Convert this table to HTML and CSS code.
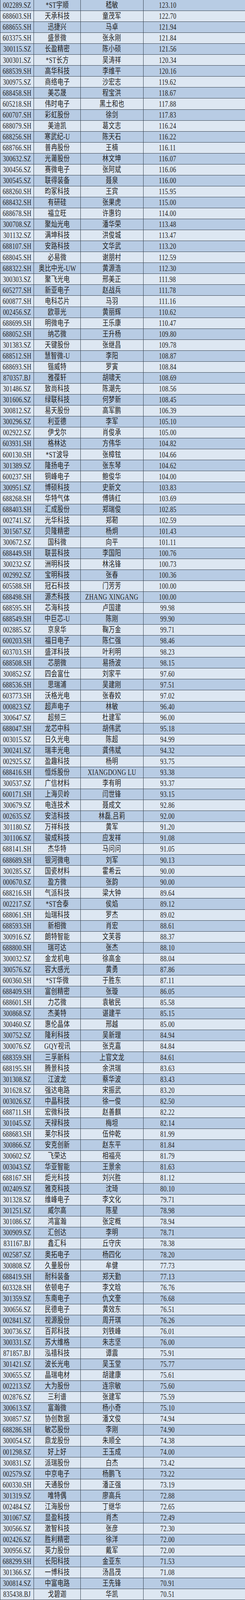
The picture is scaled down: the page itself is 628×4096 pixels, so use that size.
FILE: index.html
```html
<!DOCTYPE html>
<html lang="zh-CN">
<head>
<meta charset="utf-8">
<title>薪酬排行</title>
<link rel="stylesheet" href="styles.css">
</head>
<body>
<div class="tbl">
<div class="r d"><div class="c"><span>002289.SZ</span></div><div class="c"><span>*ST宇顺</span></div><div class="c"><span>嵇敏</span></div><div class="c n"><span>123.10</span></div></div>
<div class="r"><div class="c"><span>688603.SH</span></div><div class="c"><span>天承科技</span></div><div class="c"><span>童茂军</span></div><div class="c n"><span>122.70</span></div></div>
<div class="r d"><div class="c"><span>688655.SH</span></div><div class="c"><span>迅捷兴</span></div><div class="c"><span>马卓</span></div><div class="c n"><span>121.94</span></div></div>
<div class="r"><div class="c"><span>603375.SH</span></div><div class="c"><span>盛景微</span></div><div class="c"><span>张永刚</span></div><div class="c n"><span>121.84</span></div></div>
<div class="r d"><div class="c"><span>300115.SZ</span></div><div class="c"><span>长盈精密</span></div><div class="c"><span>陈小硕</span></div><div class="c n"><span>121.56</span></div></div>
<div class="r"><div class="c"><span>300301.SZ</span></div><div class="c"><span>*ST长方</span></div><div class="c"><span>吴涛祥</span></div><div class="c n"><span>120.34</span></div></div>
<div class="r d"><div class="c"><span>688539.SH</span></div><div class="c"><span>高华科技</span></div><div class="c"><span>李维平</span></div><div class="c n"><span>120.16</span></div></div>
<div class="r"><div class="c"><span>300975.SZ</span></div><div class="c"><span>商络电子</span></div><div class="c"><span>沙宏志</span></div><div class="c n"><span>119.62</span></div></div>
<div class="r d"><div class="c"><span>688458.SH</span></div><div class="c"><span>美芯晟</span></div><div class="c"><span>程宝洪</span></div><div class="c n"><span>118.67</span></div></div>
<div class="r"><div class="c"><span>605218.SH</span></div><div class="c"><span>伟时电子</span></div><div class="c"><span>黑土和也</span></div><div class="c n"><span>117.88</span></div></div>
<div class="r d"><div class="c"><span>600707.SH</span></div><div class="c"><span>彩虹股份</span></div><div class="c"><span>徐剑</span></div><div class="c n"><span>117.83</span></div></div>
<div class="r"><div class="c"><span>688079.SH</span></div><div class="c"><span>美迪凯</span></div><div class="c"><span>葛文志</span></div><div class="c n"><span>116.24</span></div></div>
<div class="r d"><div class="c"><span>688256.SH</span></div><div class="c"><span>寒武纪-U</span></div><div class="c"><span>陈天石</span></div><div class="c n"><span>116.22</span></div></div>
<div class="r"><div class="c"><span>688766.SH</span></div><div class="c"><span>普冉股份</span></div><div class="c"><span>王楠</span></div><div class="c n"><span>116.11</span></div></div>
<div class="r d"><div class="c"><span>300632.SZ</span></div><div class="c"><span>光莆股份</span></div><div class="c"><span>林文坤</span></div><div class="c n"><span>116.07</span></div></div>
<div class="r"><div class="c"><span>300456.SZ</span></div><div class="c"><span>赛微电子</span></div><div class="c"><span>张阿斌</span></div><div class="c n"><span>116.06</span></div></div>
<div class="r d"><div class="c"><span>300545.SZ</span></div><div class="c"><span>联得装备</span></div><div class="c"><span>聂泉</span></div><div class="c n"><span>116.00</span></div></div>
<div class="r"><div class="c"><span>688260.SH</span></div><div class="c"><span>昀冢科技</span></div><div class="c"><span>王宾</span></div><div class="c n"><span>115.95</span></div></div>
<div class="r d"><div class="c"><span>688432.SH</span></div><div class="c"><span>有研硅</span></div><div class="c"><span>张果虎</span></div><div class="c n"><span>115.00</span></div></div>
<div class="r"><div class="c"><span>688678.SH</span></div><div class="c"><span>福立旺</span></div><div class="c"><span>许惠钧</span></div><div class="c n"><span>114.00</span></div></div>
<div class="r d"><div class="c"><span>300708.SZ</span></div><div class="c"><span>聚灿光电</span></div><div class="c"><span>潘华荣</span></div><div class="c n"><span>113.48</span></div></div>
<div class="r"><div class="c"><span>301132.SZ</span></div><div class="c"><span>满坤科技</span></div><div class="c"><span>洪俊城</span></div><div class="c n"><span>113.47</span></div></div>
<div class="r d"><div class="c"><span>688107.SH</span></div><div class="c"><span>安路科技</span></div><div class="c"><span>文华武</span></div><div class="c n"><span>113.20</span></div></div>
<div class="r"><div class="c"><span>688045.SH</span></div><div class="c"><span>必易微</span></div><div class="c"><span>谢朋村</span></div><div class="c n"><span>112.59</span></div></div>
<div class="r d"><div class="c"><span>688322.SH</span></div><div class="c"><span>奥比中光-UW</span></div><div class="c"><span>黄源浩</span></div><div class="c n"><span>112.30</span></div></div>
<div class="r"><div class="c"><span>300303.SZ</span></div><div class="c"><span>聚飞光电</span></div><div class="c"><span>邢美正</span></div><div class="c n"><span>111.98</span></div></div>
<div class="r d"><div class="c"><span>605277.SH</span></div><div class="c"><span>新亚电子</span></div><div class="c"><span>赵战兵</span></div><div class="c n"><span>111.78</span></div></div>
<div class="r"><div class="c"><span>600877.SH</span></div><div class="c"><span>电科芯片</span></div><div class="c"><span>马羽</span></div><div class="c n"><span>111.16</span></div></div>
<div class="r d"><div class="c"><span>002456.SZ</span></div><div class="c"><span>欧菲光</span></div><div class="c"><span>黄丽辉</span></div><div class="c n"><span>110.62</span></div></div>
<div class="r"><div class="c"><span>688699.SH</span></div><div class="c"><span>明微电子</span></div><div class="c"><span>王乐康</span></div><div class="c n"><span>110.47</span></div></div>
<div class="r d"><div class="c"><span>688052.SH</span></div><div class="c"><span>纳芯微</span></div><div class="c"><span>王升杨</span></div><div class="c n"><span>109.80</span></div></div>
<div class="r"><div class="c"><span>301383.SZ</span></div><div class="c"><span>天键股份</span></div><div class="c"><span>张继昌</span></div><div class="c n"><span>109.78</span></div></div>
<div class="r d"><div class="c"><span>688512.SH</span></div><div class="c"><span>慧智微-U</span></div><div class="c"><span>李阳</span></div><div class="c n"><span>108.87</span></div></div>
<div class="r"><div class="c"><span>688693.SH</span></div><div class="c"><span>锴威特</span></div><div class="c"><span>罗寅</span></div><div class="c n"><span>108.84</span></div></div>
<div class="r d"><div class="c"><span>870357.BJ</span></div><div class="c"><span>雅葆轩</span></div><div class="c"><span>胡啸天</span></div><div class="c n"><span>108.69</span></div></div>
<div class="r"><div class="c"><span>301486.SZ</span></div><div class="c"><span>致尚科技</span></div><div class="c"><span>陈潮先</span></div><div class="c n"><span>108.56</span></div></div>
<div class="r d"><div class="c"><span>301606.SZ</span></div><div class="c"><span>绿联科技</span></div><div class="c"><span>何梦新</span></div><div class="c n"><span>108.45</span></div></div>
<div class="r"><div class="c"><span>300812.SZ</span></div><div class="c"><span>易天股份</span></div><div class="c"><span>高军鹏</span></div><div class="c n"><span>106.39</span></div></div>
<div class="r d"><div class="c"><span>300296.SZ</span></div><div class="c"><span>利亚德</span></div><div class="c"><span>李军</span></div><div class="c n"><span>105.10</span></div></div>
<div class="r"><div class="c"><span>002922.SZ</span></div><div class="c"><span>伊戈尔</span></div><div class="c"><span>肖俊承</span></div><div class="c n"><span>105.00</span></div></div>
<div class="r d"><div class="c"><span>603931.SH</span></div><div class="c"><span>格林达</span></div><div class="c"><span>方伟华</span></div><div class="c n"><span>104.82</span></div></div>
<div class="r"><div class="c"><span>600130.SH</span></div><div class="c"><span>*ST波导</span></div><div class="c"><span>张樟铉</span></div><div class="c n"><span>104.66</span></div></div>
<div class="r d"><div class="c"><span>301389.SZ</span></div><div class="c"><span>隆扬电子</span></div><div class="c"><span>张东琴</span></div><div class="c n"><span>104.62</span></div></div>
<div class="r"><div class="c"><span>600237.SH</span></div><div class="c"><span>铜峰电子</span></div><div class="c"><span>鲍俊华</span></div><div class="c n"><span>104.00</span></div></div>
<div class="r d"><div class="c"><span>300951.SZ</span></div><div class="c"><span>博硕科技</span></div><div class="c"><span>史新文</span></div><div class="c n"><span>103.83</span></div></div>
<div class="r"><div class="c"><span>688268.SH</span></div><div class="c"><span>华特气体</span></div><div class="c"><span>傅铸红</span></div><div class="c n"><span>103.69</span></div></div>
<div class="r d"><div class="c"><span>688403.SH</span></div><div class="c"><span>汇成股份</span></div><div class="c"><span>郑瑞俊</span></div><div class="c n"><span>102.85</span></div></div>
<div class="r"><div class="c"><span>002741.SZ</span></div><div class="c"><span>光华科技</span></div><div class="c"><span>郑靭</span></div><div class="c n"><span>102.59</span></div></div>
<div class="r d"><div class="c"><span>301567.SZ</span></div><div class="c"><span>贝隆精密</span></div><div class="c"><span>杨炯</span></div><div class="c n"><span>101.43</span></div></div>
<div class="r"><div class="c"><span>300672.SZ</span></div><div class="c"><span>国科微</span></div><div class="c"><span>向平</span></div><div class="c n"><span>101.11</span></div></div>
<div class="r d"><div class="c"><span>688449.SH</span></div><div class="c"><span>联芸科技</span></div><div class="c"><span>李国阳</span></div><div class="c n"><span>100.76</span></div></div>
<div class="r"><div class="c"><span>300232.SZ</span></div><div class="c"><span>洲明科技</span></div><div class="c"><span>林洺锋</span></div><div class="c n"><span>100.73</span></div></div>
<div class="r d"><div class="c"><span>002992.SZ</span></div><div class="c"><span>宝明科技</span></div><div class="c"><span>张春</span></div><div class="c n"><span>100.36</span></div></div>
<div class="r"><div class="c"><span>605588.SH</span></div><div class="c"><span>冠石科技</span></div><div class="c"><span>门芳芳</span></div><div class="c n"><span>100.00</span></div></div>
<div class="r d"><div class="c"><span>688498.SH</span></div><div class="c"><span>源杰科技</span></div><div class="c"><span>ZHANG XINGANG</span></div><div class="c n"><span>100.00</span></div></div>
<div class="r"><div class="c"><span>688595.SH</span></div><div class="c"><span>芯海科技</span></div><div class="c"><span>卢国建</span></div><div class="c n"><span>99.98</span></div></div>
<div class="r d"><div class="c"><span>688549.SH</span></div><div class="c"><span>中巨芯-U</span></div><div class="c"><span>陈刚</span></div><div class="c n"><span>99.90</span></div></div>
<div class="r"><div class="c"><span>002885.SZ</span></div><div class="c"><span>京泉华</span></div><div class="c"><span>鞠万金</span></div><div class="c n"><span>99.71</span></div></div>
<div class="r d"><div class="c"><span>600203.SH</span></div><div class="c"><span>福日电子</span></div><div class="c"><span>陈仁强</span></div><div class="c n"><span>98.46</span></div></div>
<div class="r"><div class="c"><span>603703.SH</span></div><div class="c"><span>盛洋科技</span></div><div class="c"><span>叶利明</span></div><div class="c n"><span>98.23</span></div></div>
<div class="r d"><div class="c"><span>688508.SH</span></div><div class="c"><span>芯朋微</span></div><div class="c"><span>易扬波</span></div><div class="c n"><span>98.15</span></div></div>
<div class="r"><div class="c"><span>300852.SZ</span></div><div class="c"><span>四会富仕</span></div><div class="c"><span>刘家平</span></div><div class="c n"><span>97.60</span></div></div>
<div class="r d"><div class="c"><span>688536.SH</span></div><div class="c"><span>思瑞浦</span></div><div class="c"><span>吴建刚</span></div><div class="c n"><span>97.51</span></div></div>
<div class="r"><div class="c"><span>603773.SH</span></div><div class="c"><span>沃格光电</span></div><div class="c"><span>张春姣</span></div><div class="c n"><span>97.02</span></div></div>
<div class="r d"><div class="c"><span>000823.SZ</span></div><div class="c"><span>超声电子</span></div><div class="c"><span>林敏</span></div><div class="c n"><span>96.40</span></div></div>
<div class="r"><div class="c"><span>300647.SZ</span></div><div class="c"><span>超频三</span></div><div class="c"><span>杜建军</span></div><div class="c n"><span>96.00</span></div></div>
<div class="r d"><div class="c"><span>688047.SH</span></div><div class="c"><span>龙芯中科</span></div><div class="c"><span>胡伟武</span></div><div class="c n"><span>95.18</span></div></div>
<div class="r"><div class="c"><span>003015.SZ</span></div><div class="c"><span>日久光电</span></div><div class="c"><span>陈超</span></div><div class="c n"><span>94.99</span></div></div>
<div class="r d"><div class="c"><span>300241.SZ</span></div><div class="c"><span>瑞丰光电</span></div><div class="c"><span>龚伟斌</span></div><div class="c n"><span>94.32</span></div></div>
<div class="r"><div class="c"><span>002925.SZ</span></div><div class="c"><span>盈趣科技</span></div><div class="c"><span>杨明</span></div><div class="c n"><span>93.75</span></div></div>
<div class="r d"><div class="c"><span>688416.SH</span></div><div class="c"><span>恒烁股份</span></div><div class="c"><span>XIANGDONG LU</span></div><div class="c n"><span>93.38</span></div></div>
<div class="r"><div class="c"><span>300537.SZ</span></div><div class="c"><span>广信材料</span></div><div class="c"><span>李有明</span></div><div class="c n"><span>93.37</span></div></div>
<div class="r d"><div class="c"><span>600171.SH</span></div><div class="c"><span>上海贝岭</span></div><div class="c"><span>闫世锋</span></div><div class="c n"><span>93.15</span></div></div>
<div class="r"><div class="c"><span>300679.SZ</span></div><div class="c"><span>电连技术</span></div><div class="c"><span>聂成文</span></div><div class="c n"><span>92.86</span></div></div>
<div class="r d"><div class="c"><span>002635.SZ</span></div><div class="c"><span>安洁科技</span></div><div class="c"><span>林磊,吕莉</span></div><div class="c n"><span>92.00</span></div></div>
<div class="r"><div class="c"><span>301180.SZ</span></div><div class="c"><span>万祥科技</span></div><div class="c"><span>黄军</span></div><div class="c n"><span>91.20</span></div></div>
<div class="r d"><div class="c"><span>301106.SZ</span></div><div class="c"><span>骏成科技</span></div><div class="c"><span>应发祥</span></div><div class="c n"><span>91.08</span></div></div>
<div class="r"><div class="c"><span>688141.SH</span></div><div class="c"><span>杰华特</span></div><div class="c"><span>马问问</span></div><div class="c n"><span>91.05</span></div></div>
<div class="r d"><div class="c"><span>688689.SH</span></div><div class="c"><span>银河微电</span></div><div class="c"><span>刘军</span></div><div class="c n"><span>90.13</span></div></div>
<div class="r"><div class="c"><span>300285.SZ</span></div><div class="c"><span>国瓷材料</span></div><div class="c"><span>霍希云</span></div><div class="c n"><span>90.00</span></div></div>
<div class="r d"><div class="c"><span>000670.SZ</span></div><div class="c"><span>盈方微</span></div><div class="c"><span>张韵</span></div><div class="c n"><span>90.00</span></div></div>
<div class="r"><div class="c"><span>688216.SH</span></div><div class="c"><span>气派科技</span></div><div class="c"><span>梁大钟</span></div><div class="c n"><span>89.64</span></div></div>
<div class="r d"><div class="c"><span>002217.SZ</span></div><div class="c"><span>*ST合泰</span></div><div class="c"><span>侯焰</span></div><div class="c n"><span>89.12</span></div></div>
<div class="r"><div class="c"><span>688061.SH</span></div><div class="c"><span>灿瑞科技</span></div><div class="c"><span>罗杰</span></div><div class="c n"><span>89.02</span></div></div>
<div class="r d"><div class="c"><span>688593.SH</span></div><div class="c"><span>新相微</span></div><div class="c"><span>肖宏</span></div><div class="c n"><span>88.61</span></div></div>
<div class="r"><div class="c"><span>300916.SZ</span></div><div class="c"><span>朗特智能</span></div><div class="c"><span>文芙蓉</span></div><div class="c n"><span>88.37</span></div></div>
<div class="r d"><div class="c"><span>688800.SH</span></div><div class="c"><span>瑞可达</span></div><div class="c"><span>张杰</span></div><div class="c n"><span>88.10</span></div></div>
<div class="r"><div class="c"><span>300032.SZ</span></div><div class="c"><span>金龙机电</span></div><div class="c"><span>徐高金</span></div><div class="c n"><span>88.04</span></div></div>
<div class="r d"><div class="c"><span>300576.SZ</span></div><div class="c"><span>容大感光</span></div><div class="c"><span>黄勇</span></div><div class="c n"><span>87.86</span></div></div>
<div class="r"><div class="c"><span>600360.SH</span></div><div class="c"><span>*ST华微</span></div><div class="c"><span>于胜东</span></div><div class="c n"><span>87.11</span></div></div>
<div class="r d"><div class="c"><span>688409.SH</span></div><div class="c"><span>富创精密</span></div><div class="c"><span>张璇</span></div><div class="c n"><span>86.05</span></div></div>
<div class="r"><div class="c"><span>688601.SH</span></div><div class="c"><span>力芯微</span></div><div class="c"><span>袁敏民</span></div><div class="c n"><span>85.58</span></div></div>
<div class="r d"><div class="c"><span>300868.SZ</span></div><div class="c"><span>杰美特</span></div><div class="c"><span>谌建平</span></div><div class="c n"><span>85.15</span></div></div>
<div class="r"><div class="c"><span>300460.SZ</span></div><div class="c"><span>惠伦晶体</span></div><div class="c"><span>邢越</span></div><div class="c n"><span>85.00</span></div></div>
<div class="r d"><div class="c"><span>300752.SZ</span></div><div class="c"><span>隆利科技</span></div><div class="c"><span>吴新理</span></div><div class="c n"><span>84.94</span></div></div>
<div class="r"><div class="c"><span>300076.SZ</span></div><div class="c"><span>GQY视讯</span></div><div class="c"><span>张克嘉</span></div><div class="c n"><span>84.84</span></div></div>
<div class="r d"><div class="c"><span>688359.SH</span></div><div class="c"><span>三孚新科</span></div><div class="c"><span>上官文龙</span></div><div class="c n"><span>84.61</span></div></div>
<div class="r"><div class="c"><span>688195.SH</span></div><div class="c"><span>腾景科技</span></div><div class="c"><span>余洪瑞</span></div><div class="c n"><span>83.63</span></div></div>
<div class="r d"><div class="c"><span>301308.SZ</span></div><div class="c"><span>江波龙</span></div><div class="c"><span>蔡华波</span></div><div class="c n"><span>83.43</span></div></div>
<div class="r"><div class="c"><span>301628.SZ</span></div><div class="c"><span>强达电路</span></div><div class="c"><span>宋振武</span></div><div class="c n"><span>83.20</span></div></div>
<div class="r d"><div class="c"><span>003026.SZ</span></div><div class="c"><span>中晶科技</span></div><div class="c"><span>徐一俊</span></div><div class="c n"><span>82.50</span></div></div>
<div class="r"><div class="c"><span>688711.SH</span></div><div class="c"><span>宏微科技</span></div><div class="c"><span>赵善麒</span></div><div class="c n"><span>82.22</span></div></div>
<div class="r d"><div class="c"><span>301045.SZ</span></div><div class="c"><span>天禄科技</span></div><div class="c"><span>梅坦</span></div><div class="c n"><span>82.14</span></div></div>
<div class="r"><div class="c"><span>688683.SH</span></div><div class="c"><span>莱尔科技</span></div><div class="c"><span>伍仲乾</span></div><div class="c n"><span>81.99</span></div></div>
<div class="r d"><div class="c"><span>300866.SZ</span></div><div class="c"><span>安克创新</span></div><div class="c"><span>赵东平</span></div><div class="c n"><span>81.84</span></div></div>
<div class="r"><div class="c"><span>300602.SZ</span></div><div class="c"><span>飞荣达</span></div><div class="c"><span>相福亮</span></div><div class="c n"><span>81.79</span></div></div>
<div class="r d"><div class="c"><span>003043.SZ</span></div><div class="c"><span>华亚智能</span></div><div class="c"><span>王景余</span></div><div class="c n"><span>81.63</span></div></div>
<div class="r"><div class="c"><span>688167.SH</span></div><div class="c"><span>炬光科技</span></div><div class="c"><span>刘兴胜</span></div><div class="c n"><span>81.12</span></div></div>
<div class="r d"><div class="c"><span>002409.SZ</span></div><div class="c"><span>雅克科技</span></div><div class="c"><span>沈琦</span></div><div class="c n"><span>80.10</span></div></div>
<div class="r"><div class="c"><span>301328.SZ</span></div><div class="c"><span>维峰电子</span></div><div class="c"><span>李文化</span></div><div class="c n"><span>79.71</span></div></div>
<div class="r d"><div class="c"><span>301251.SZ</span></div><div class="c"><span>威尔高</span></div><div class="c"><span>陈星</span></div><div class="c n"><span>78.98</span></div></div>
<div class="r"><div class="c"><span>301086.SZ</span></div><div class="c"><span>鸿富瀚</span></div><div class="c"><span>张定概</span></div><div class="c n"><span>78.94</span></div></div>
<div class="r d"><div class="c"><span>300909.SZ</span></div><div class="c"><span>汇创达</span></div><div class="c"><span>李明</span></div><div class="c n"><span>78.71</span></div></div>
<div class="r"><div class="c"><span>831167.BJ</span></div><div class="c"><span>鑫汇科</span></div><div class="c"><span>丘守庆</span></div><div class="c n"><span>78.38</span></div></div>
<div class="r d"><div class="c"><span>002587.SZ</span></div><div class="c"><span>奥拓电子</span></div><div class="c"><span>杨四化</span></div><div class="c n"><span>78.20</span></div></div>
<div class="r"><div class="c"><span>300808.SZ</span></div><div class="c"><span>久量股份</span></div><div class="c"><span>牟健</span></div><div class="c n"><span>77.73</span></div></div>
<div class="r d"><div class="c"><span>688419.SH</span></div><div class="c"><span>耐科装备</span></div><div class="c"><span>郑天勤</span></div><div class="c n"><span>77.13</span></div></div>
<div class="r"><div class="c"><span>603328.SH</span></div><div class="c"><span>依顿电子</span></div><div class="c"><span>李文晗</span></div><div class="c n"><span>76.76</span></div></div>
<div class="r d"><div class="c"><span>301359.SZ</span></div><div class="c"><span>东南电子</span></div><div class="c"><span>仇文奎</span></div><div class="c n"><span>76.68</span></div></div>
<div class="r"><div class="c"><span>300656.SZ</span></div><div class="c"><span>民德电子</span></div><div class="c"><span>黄效东</span></div><div class="c n"><span>76.51</span></div></div>
<div class="r d"><div class="c"><span>002841.SZ</span></div><div class="c"><span>视源股份</span></div><div class="c"><span>周开琪</span></div><div class="c n"><span>76.26</span></div></div>
<div class="r"><div class="c"><span>300736.SZ</span></div><div class="c"><span>百邦科技</span></div><div class="c"><span>刘铁峰</span></div><div class="c n"><span>76.01</span></div></div>
<div class="r d"><div class="c"><span>300331.SZ</span></div><div class="c"><span>苏大维格</span></div><div class="c"><span>朱志坚</span></div><div class="c n"><span>76.00</span></div></div>
<div class="r"><div class="c"><span>871857.BJ</span></div><div class="c"><span>泓禧科技</span></div><div class="c"><span>谭震</span></div><div class="c n"><span>75.91</span></div></div>
<div class="r d"><div class="c"><span>301421.SZ</span></div><div class="c"><span>波长光电</span></div><div class="c"><span>吴玉堂</span></div><div class="c n"><span>75.77</span></div></div>
<div class="r"><div class="c"><span>300655.SZ</span></div><div class="c"><span>晶瑞电材</span></div><div class="c"><span>胡建康</span></div><div class="c n"><span>75.61</span></div></div>
<div class="r d"><div class="c"><span>002213.SZ</span></div><div class="c"><span>大为股份</span></div><div class="c"><span>连宗敏</span></div><div class="c n"><span>75.60</span></div></div>
<div class="r"><div class="c"><span>002876.SZ</span></div><div class="c"><span>三利谱</span></div><div class="c"><span>张建军</span></div><div class="c n"><span>75.59</span></div></div>
<div class="r d"><div class="c"><span>300613.SZ</span></div><div class="c"><span>富瀚微</span></div><div class="c"><span>杨小奇</span></div><div class="c n"><span>75.10</span></div></div>
<div class="r"><div class="c"><span>300857.SZ</span></div><div class="c"><span>协创数据</span></div><div class="c"><span>潘文俊</span></div><div class="c n"><span>74.94</span></div></div>
<div class="r d"><div class="c"><span>688286.SH</span></div><div class="c"><span>敏芯股份</span></div><div class="c"><span>李刚</span></div><div class="c n"><span>74.90</span></div></div>
<div class="r"><div class="c"><span>300054.SZ</span></div><div class="c"><span>鼎龙股份</span></div><div class="c"><span>朱顺全</span></div><div class="c n"><span>74.38</span></div></div>
<div class="r d"><div class="c"><span>001298.SZ</span></div><div class="c"><span>好上好</span></div><div class="c"><span>王玉成</span></div><div class="c n"><span>74.00</span></div></div>
<div class="r"><div class="c"><span>300831.SZ</span></div><div class="c"><span>派瑞股份</span></div><div class="c"><span>白杰</span></div><div class="c n"><span>73.42</span></div></div>
<div class="r d"><div class="c"><span>002579.SZ</span></div><div class="c"><span>中京电子</span></div><div class="c"><span>杨鹏飞</span></div><div class="c n"><span>73.22</span></div></div>
<div class="r"><div class="c"><span>600330.SH</span></div><div class="c"><span>天通股份</span></div><div class="c"><span>潘正强</span></div><div class="c n"><span>73.19</span></div></div>
<div class="r d"><div class="c"><span>301319.SZ</span></div><div class="c"><span>唯特偶</span></div><div class="c"><span>廖高兵</span></div><div class="c n"><span>72.88</span></div></div>
<div class="r"><div class="c"><span>002484.SZ</span></div><div class="c"><span>江海股份</span></div><div class="c"><span>丁继华</span></div><div class="c n"><span>72.65</span></div></div>
<div class="r d"><div class="c"><span>301067.SZ</span></div><div class="c"><span>显盈科技</span></div><div class="c"><span>肖杰</span></div><div class="c n"><span>72.49</span></div></div>
<div class="r"><div class="c"><span>300566.SZ</span></div><div class="c"><span>激智科技</span></div><div class="c"><span>张彦</span></div><div class="c n"><span>72.30</span></div></div>
<div class="r d"><div class="c"><span>002426.SZ</span></div><div class="c"><span>胜利精密</span></div><div class="c"><span>徐洋</span></div><div class="c n"><span>72.00</span></div></div>
<div class="r"><div class="c"><span>300956.SZ</span></div><div class="c"><span>英力股份</span></div><div class="c"><span>戴军</span></div><div class="c n"><span>72.00</span></div></div>
<div class="r d"><div class="c"><span>688299.SH</span></div><div class="c"><span>长阳科技</span></div><div class="c"><span>金亚东</span></div><div class="c n"><span>71.53</span></div></div>
<div class="r"><div class="c"><span>301366.SZ</span></div><div class="c"><span>一博科技</span></div><div class="c"><span>汤昌茂</span></div><div class="c n"><span>71.08</span></div></div>
<div class="r d"><div class="c"><span>300814.SZ</span></div><div class="c"><span>中富电路</span></div><div class="c"><span>王先锋</span></div><div class="c n"><span>70.91</span></div></div>
<div class="r"><div class="c"><span>835438.BJ</span></div><div class="c"><span>戈碧迦</span></div><div class="c"><span>华凯</span></div><div class="c n"><span>70.51</span></div></div>
</div>
</body>
</html>
```

FILE: styles.css
```css
html, body {
  margin: 0;
  padding: 0;
  background: #dce6f1;
}

.tbl {
  width: 628px;
  height: 4096px;
  display: grid;
  grid-template-rows: repeat(146, 1fr);
  border-left: 1px solid #34404e;
  box-sizing: border-box;
  font-family: "Liberation Serif", "Noto Sans CJK SC", serif;
  font-size: 20.5px;
  color: #222222;
}

.r {
  display: grid;
  grid-template-columns: 86.4px 119.7px 160.55px 1fr;
  background: #dde7f2;
  border-bottom: 1px solid #34404e;
  min-height: 0;
}

.r.d {
  background: #b8cce4;
}

.c {
  display: flex;
  align-items: center;
  justify-content: center;
  border-right: 1px solid #34404e;
  overflow: hidden;
  white-space: nowrap;
  line-height: 1;
}

.c.n {
  border-right: none;
  padding-right: 137px;
}

.c span {
  display: inline-block;
  transform: scaleX(0.76);
  letter-spacing: 0.5px;
}
```
